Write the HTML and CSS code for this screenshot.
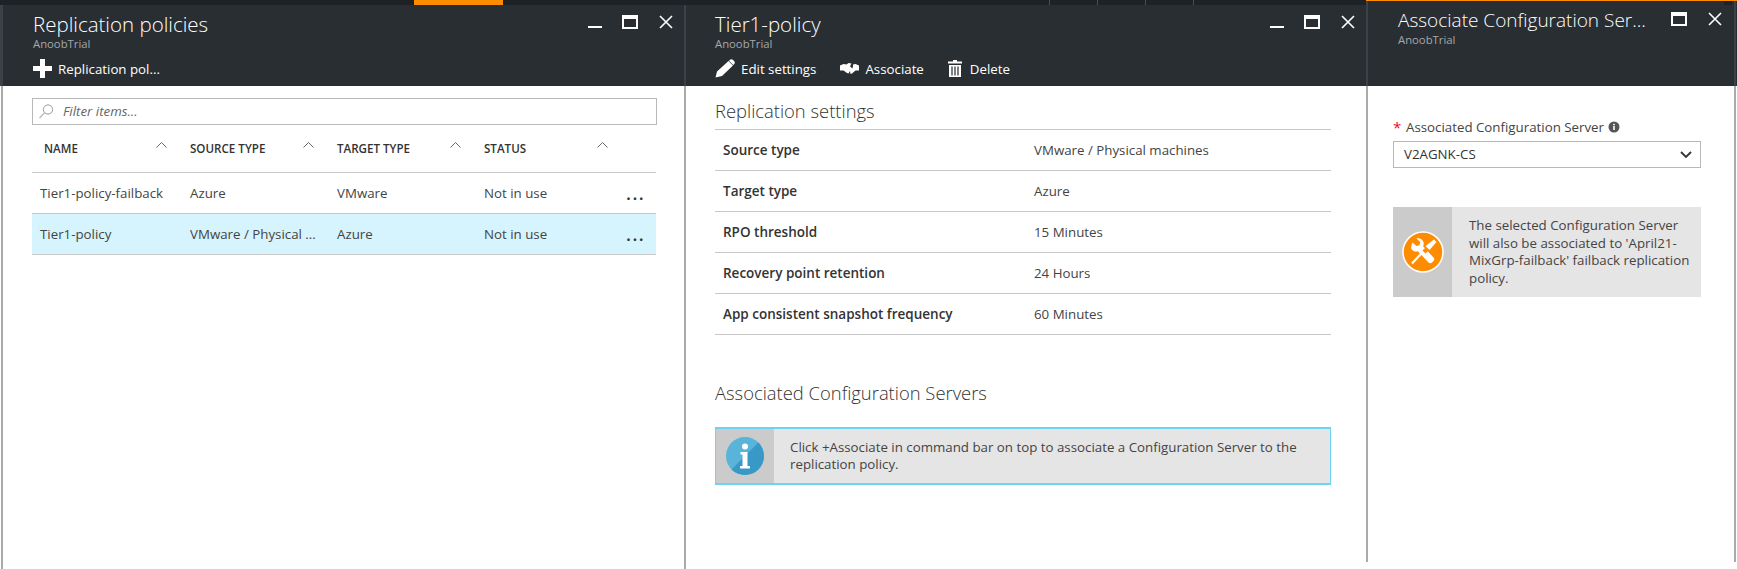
FILE: index.html
```html
<!DOCTYPE html>
<html lang="en">
<head>
    <meta charset="UTF-8">
    <title>Replication policies</title>
    <link rel="stylesheet" href="styles.css">
</head>
<body>
    <div class="portal">

        <!-- Blade 1 : policies list -->
        <section class="blade blade-list">
            <div class="strip"><span class="strip-tab"></span></div>
            <header class="blade-head">
                <div class="title-row">
                    <div>
                        <h1>Replication policies</h1>
                        <p class="subtitle">AnoobTrial</p>
                    </div>
                    <div class="win-controls">
                        <svg class="win-min" width="14" height="14" viewBox="0 0 14 14"><rect x="0" y="11" width="14" height="2" fill="#fff"/></svg>
                        <svg class="win-max" width="16" height="14" viewBox="0 0 16 14"><path d="M0 0h16v14H0z M2 4v8h12V4z" fill="#fff" fill-rule="evenodd"/></svg>
                        <svg class="win-close" width="14" height="14" viewBox="0 0 14 14"><path d="M1 1l12 12M13 1L1 13" stroke="#fff" stroke-width="1.6"/></svg>
                    </div>
                </div>
                <div class="commands">
                    <span class="command">
                        <svg width="19" height="19" viewBox="0 0 19 19"><path d="M7 0h5v7h7v5h-7v7H7v-7H0V7h7z" fill="#fff"/></svg>
                        Replication pol...
                    </span>
                </div>
            </header>
            <div class="blade-body">
                <div class="filter">
                    <svg width="14" height="15" viewBox="0 0 14 15"><circle cx="9" cy="5.5" r="4.6" fill="none" stroke="#999" stroke-width="1"/><path d="M5.6 8.8L0.5 14" stroke="#bbb" stroke-width="1.4"/></svg>
                    <span>Filter items...</span>
                </div>
                <table class="policies">
                    <colgroup>
                        <col class="col-name"><col class="col-std"><col class="col-std"><col class="col-std"><col class="col-more">
                    </colgroup>
                    <thead>
                        <tr>
                            <th class="th-name"><svg class="sort" width="11" height="6" viewBox="0 0 11 6"><path d="M0.5 5.5l5-5 5 5" fill="none" stroke="#666"/></svg>NAME</th>
                            <th><svg class="sort" width="11" height="6" viewBox="0 0 11 6"><path d="M0.5 5.5l5-5 5 5" fill="none" stroke="#666"/></svg>SOURCE TYPE</th>
                            <th><svg class="sort" width="11" height="6" viewBox="0 0 11 6"><path d="M0.5 5.5l5-5 5 5" fill="none" stroke="#666"/></svg>TARGET TYPE</th>
                            <th><svg class="sort" width="11" height="6" viewBox="0 0 11 6"><path d="M0.5 5.5l5-5 5 5" fill="none" stroke="#666"/></svg>STATUS</th>
                            <th></th>
                        </tr>
                    </thead>
                    <tbody>
                        <tr>
                            <td class="td-name">Tier1-policy-failback</td>
                            <td>Azure</td>
                            <td>VMware</td>
                            <td>Not in use</td>
                            <td class="more">...</td>
                        </tr>
                        <tr class="selected">
                            <td class="td-name">Tier1-policy</td>
                            <td>VMware / Physical ...</td>
                            <td>Azure</td>
                            <td>Not in use</td>
                            <td class="more">...</td>
                        </tr>
                    </tbody>
                </table>
            </div>
        </section>

        <!-- Blade 2 : policy details -->
        <section class="blade blade-detail">
            <div class="strip strip-ticks"><i></i><i></i><i></i><i></i></div>
            <header class="blade-head">
                <div class="title-row">
                    <div>
                        <h1>Tier1-policy</h1>
                        <p class="subtitle">AnoobTrial</p>
                    </div>
                    <div class="win-controls">
                        <svg class="win-min" width="14" height="14" viewBox="0 0 14 14"><rect x="0" y="11" width="14" height="2" fill="#fff"/></svg>
                        <svg class="win-max" width="16" height="14" viewBox="0 0 16 14"><path d="M0 0h16v14H0z M2 4v8h12V4z" fill="#fff" fill-rule="evenodd"/></svg>
                        <svg class="win-close" width="14" height="14" viewBox="0 0 14 14"><path d="M1 1l12 12M13 1L1 13" stroke="#fff" stroke-width="1.6"/></svg>
                    </div>
                </div>
                <div class="commands">
                    <span class="command">
                        <svg width="20" height="19" viewBox="0 0 20 19"><path d="M0.5 18.5l1.5-6L13.5 2l4.5 4.5L7 17z M15 0.8c1-.8 2-.8 2.800 0l1.500 1.500c.7.800.7 1.800 0 2.700l-1 1L14 1.700z" fill="#fff"/></svg>
                        Edit settings
                    </span>
                    <span class="command">
                        <svg width="19" height="11" viewBox="0 0 19 11"><path d="M0 2.500l3.500-1.500 3 .5L8.500 0l3 .5L10 3.200l2.300 2.300.7-2V1.500l2.500-.5 3.500 1.500v5L15.500 7.500l-3.500 3-1.500.5-.5-3-1.500 2.500L7 10 3.500 7.500 0 7.500z" fill="#fff"/></svg>
                        Associate
                    </span>
                    <span class="command command-delete">
                        <svg width="14" height="17" viewBox="0 0 14 17"><path d="M5 0h4v1.500h5V3.500H0V1.500h5z M1 5h12v12H1z" fill="#fff"/><path d="M4 6.500v9M7 6.500v9M10 6.500v9" stroke="#292e33" stroke-width="1.200"/></svg>
                        Delete
                    </span>
                </div>
            </header>
            <div class="blade-body">
                <h2>Replication settings</h2>
                <div class="prop"><span>Source type</span><span>VMware / Physical machines</span></div>
                <div class="prop"><span>Target type</span><span>Azure</span></div>
                <div class="prop"><span>RPO threshold</span><span>15 Minutes</span></div>
                <div class="prop"><span>Recovery point retention</span><span>24 Hours</span></div>
                <div class="prop"><span>App consistent snapshot frequency</span><span>60 Minutes</span></div>

                <h2 class="h2-plain">Associated Configuration Servers</h2>
                <div class="notice notice-info">
                    <div class="notice-icon">
                        <svg width="38" height="38" viewBox="0 0 38 38">
                            <circle cx="19" cy="19" r="19" fill="#59b4d9"/>
                            <path d="M32.400 5.500A19 19 0 0 1 5.500 32.400z" fill="#3999c6"/>
                            <circle cx="19" cy="9.500" r="3" fill="#fff"/>
                            <path d="M14.500 15h7v14h2.500v2.500H14v-2.500h2.500V17.500h-2z" fill="#fff"/>
                        </svg>
                    </div>
                    <p>Click +Associate in command bar on top to associate a Configuration Server to the replication policy.</p>
                </div>
            </div>
        </section>

        <!-- Blade 3 : associate form -->
        <section class="blade blade-form">
            <div class="strip strip-orange"></div>
            <header class="blade-head">
                <span class="head-notch"></span>
                <div class="title-row">
                    <div>
                        <h1>Associate Configuration Ser...</h1>
                        <p class="subtitle">AnoobTrial</p>
                    </div>
                    <div class="win-controls">
                        <svg class="win-max" width="16" height="14" viewBox="0 0 16 14"><path d="M0 0h16v14H0z M2 4v8h12V4z" fill="#fff" fill-rule="evenodd"/></svg>
                        <svg class="win-close" width="14" height="14" viewBox="0 0 14 14"><path d="M1 1l12 12M13 1L1 13" stroke="#fff" stroke-width="1.6"/></svg>
                    </div>
                </div>
            </header>
            <div class="blade-body">
                <label class="field-label">
                    <span class="required">*</span>
                    Associated Configuration Server
                    <svg width="12" height="12" viewBox="0 0 12 12"><circle cx="6" cy="6" r="5.500" fill="#555"/><rect x="5.200" y="5" width="1.600" height="4" fill="#fff"/><rect x="5.200" y="2.800" width="1.600" height="1.500" fill="#fff"/></svg>
                </label>
                <div class="select">
                    <span>V2AGNK-CS</span>
                    <svg width="12" height="7" viewBox="0 0 12 7"><path d="M1 1l5 5 5-5" fill="none" stroke="#333" stroke-width="1.800"/></svg>
                </div>
                <div class="notice notice-warn">
                    <div class="notice-icon">
                        <svg width="42" height="42" viewBox="0 0 42 42">
                            <circle cx="21" cy="21" r="20" fill="#ff8c00" stroke="#fff" stroke-width="1.500"/>
                            <path d="M10.500 11.500l4 3.500 3-.8.800-3-3.800-3.700c3.500-.8 7 1.500 7.200 5 0 1-.2 2-.6 2.800L31.500 26.500c1 1 1 2.500 0 3.500l-1.500 1.500c-1 1-2.500 1-3.500 0L15.800 20.200c-3.500 1.200-7.300-1.200-6.500-5.300z" fill="#fff"/>
                            <path d="M32 8.500l2.500 2.500-7 8-4-4z" fill="#fff"/>
                            <path d="M24 17.500L10 32.500" stroke="#fff" stroke-width="2.200"/>
                            <path d="M23.500 16.500l3 3-3 3-3-3z" fill="#ff8c00"/>
                        </svg>
                    </div>
                    <p>The selected Configuration Server will also be associated to 'April21-MixGrp-failback' failback replication policy.</p>
                </div>
            </div>
        </section>

    </div>
</body>
</html>
```

FILE: styles.css
```css
* {
    box-sizing: border-box;
}

html, body {
    margin: 0;
    padding: 0;
    background-color: #fff;
}

body {
    font-family: "Open Sans", "Noto Sans", Arial, sans-serif;
    font-size: 13.3px;
    color: #444;
    overflow: hidden;
}

.portal {
    display: flex;
    align-items: flex-start;
    width: 1737px;
    height: 569px;
    overflow: hidden;
}

/* Blades */
.blade {
    display: flex;
    flex-direction: column;
    flex: none;
    height: 569px;
}

.blade-list {
    width: 684px;
}

.blade-detail {
    width: 682px;
}

.blade-form {
    width: 371px;
    height: 562px;
}

.blade-head {
    flex: none;
    height: 81px;
    padding-left: 29px;
    background-color: #292e33;
    border-left: 2px solid #3c4147;
    color: #fff;
}

.blade-list .blade-head {
    padding-left: 30px;
    border-left-width: 3px;
}

.blade-form .blade-head {
    position: relative;
    height: 85px;
    padding-left: 30px;
    box-shadow: inset -1px 0 0 #292e33, inset -3px 0 0 #3c4147;
}

.head-notch {
    position: absolute;
    top: 0;
    right: 5px;
    width: 8px;
    height: 4px;
    background-color: #1e2227;
}

.blade-body {
    flex: 1;
    background-color: #fff;
    border-left: 2px solid #aaa;
}

/* Top strip */
.strip {
    display: flex;
    flex: none;
    height: 5px;
    background-color: #1e2227;
}

.strip-tab {
    width: 89px;
    margin-left: 414px;
    background-color: #ff8c00;
}

.strip-ticks {
    padding-left: 365px;
}

.strip-ticks i {
    width: 1px;
    margin-right: 47px;
    background-color: #4a4f55;
}

.strip-orange {
    height: 1px;
    background-color: #ff8c00;
}

/* Header */
.title-row {
    display: flex;
    justify-content: space-between;
    height: 50px;
}

h1 {
    margin: 0;
    padding-top: 6px;
    font-size: 20.5px;
    font-weight: 300;
    line-height: 26px;
    white-space: nowrap;
}

.blade-form h1 {
    font-size: 19px;
}

.subtitle {
    margin: 0;
    font-size: 11.3px;
    line-height: 14px;
    color: #a5a8aa;
}

.win-controls {
    display: flex;
    gap: 20px;
    padding-top: 10px;
    padding-right: 11px;
}

.blade-form .win-controls {
    padding-top: 11px;
    padding-right: 15px;
}

.win-controls svg {
    display: block;
}

.win-max {
    margin-right: 1px;
}

.commands {
    display: flex;
    gap: 24px;
    height: 27px;
}

.command {
    display: flex;
    align-items: center;
    gap: 6px;
    font-size: 13.3px;
    white-space: nowrap;
}

.command-delete {
    gap: 8px;
}

/* Filter and list */
.blade-list .blade-body {
    margin-left: 1px;
    padding: 12px 0 0 29px;
}

.filter {
    display: flex;
    align-items: center;
    gap: 10px;
    width: 625px;
    height: 27px;
    padding-left: 6px;
    padding-bottom: 1px;
    border: 1px solid #b8b8b8;
    font-style: italic;
    color: #666;
}

.policies {
    width: 624px;
    border-collapse: collapse;
    table-layout: fixed;
}

.col-name {
    width: 158px;
}

.col-std {
    width: 147px;
}

.col-more {
    width: 25px;
}

.policies th {
    height: 47px;
    padding: 0;
    font-size: 11.6px;
    font-weight: 600;
    text-align: left;
    color: #333;
    border-bottom: 1px solid #c8c8c8;
}

.policies th.th-name {
    padding-left: 12px;
}

.sort {
    float: right;
    margin-top: 1px;
    margin-right: 23px;
}

.policies td {
    height: 41px;
    padding: 0;
    white-space: nowrap;
    overflow: hidden;
    border-bottom: 1px solid #c8c8c8;
}

.policies td.td-name {
    padding-left: 8px;
}

.policies td.more {
    font-size: 18px;
    font-weight: 600;
    letter-spacing: 1.5px;
    text-indent: -5px;
    overflow: visible;
    color: #333;
}

.selected td {
    background-color: #d6f4fd;
}

/* Detail blade */
.blade-detail .blade-body {
    padding-left: 29px;
    padding-right: 35px;
}

h2 {
    margin: 0;
    padding: 12px 0 5px;
    font-size: 18.4px;
    font-weight: 300;
    line-height: 26px;
    color: #333;
    border-bottom: 1px solid #c8c8c8;
}

h2.h2-plain {
    margin-top: 45px;
    padding: 0;
    border-bottom: none;
}

.prop {
    display: grid;
    grid-template-columns: 311px 1fr;
    align-items: center;
    height: 41px;
    padding-left: 8px;
    border-bottom: 1px solid #c8c8c8;
}

.prop span:first-child {
    font-size: 13.5px;
    font-weight: 600;
    color: #333;
}

/* Notices */
.notice {
    display: flex;
    background-color: #e5e5e5;
}

.notice p {
    margin: 0;
    line-height: 17.5px;
}

.notice-icon {
    display: flex;
    flex: none;
    align-items: center;
    justify-content: center;
    background-color: #cbcbcb;
}

.notice-info {
    height: 58px;
    margin-top: 21px;
    border: solid #6dd3f2;
    border-width: 2px 1px;
}

.notice-info .notice-icon {
    width: 58px;
}

.notice-info p {
    align-self: center;
    padding: 0 20px 0 16px;
}

.notice-warn {
    height: 90px;
    margin-top: 39px;
}

.notice-warn .notice-icon {
    width: 59px;
}

.notice-warn p {
    align-self: center;
    padding: 0 5px 0 17px;
}

/* Form blade */
.blade-form .blade-body {
    padding: 33px 33px 0 25px;
    border-right: 2px solid #aaa;
    margin-right: 1px;
}

.field-label {
    display: flex;
    align-items: center;
    gap: 4px;
    height: 16px;
    white-space: nowrap;
}

.required {
    width: 9px;
    font-size: 15px;
    color: #e81123;
}

.select {
    display: flex;
    align-items: center;
    justify-content: space-between;
    height: 27px;
    margin-top: 6px;
    padding: 0 8px 1px 10px;
    border: 1px solid #b8b8b8;
    color: #333;
}
```
